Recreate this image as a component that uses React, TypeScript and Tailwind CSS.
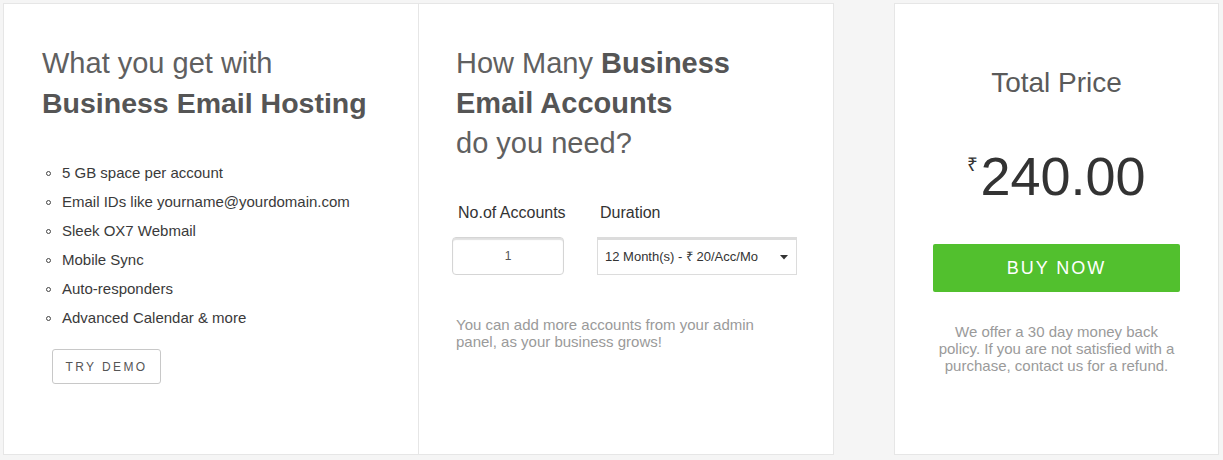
import React from "react";

const features = [
  "5 GB space per account",
  "Email IDs like yourname@yourdomain.com",
  "Sleek OX7 Webmail",
  "Mobile Sync",
  "Auto-responders",
  "Advanced Calendar & more",
];

export default function App() {
  return (
    <div
      className="h-[460px] w-[1223px] bg-[#f5f5f5] pt-[3px] pl-[3px] flex gap-[60px]"
      style={{ fontFamily: '"Liberation Sans", Arial, sans-serif' }}
    >
      {/* Left card */}
      <div className="w-[831px] h-[452px] bg-white border border-[#e6e6e6] flex">
        <div className="w-[415px] border-r border-[#e6e6e6] pl-[38px] pt-[39px]">
          <h2 className="text-[29px] leading-[40px] text-[#606060] font-light">
            What you get with
            <br />
            <span className="font-bold text-[28.5px] text-[#555]">Business Email Hosting</span>
          </h2>
          <ul className="mt-[36px] pl-[4px]">
            {features.map((f) => (
              <li key={f} className="flex items-center h-[29px] text-[15px] text-[#3a3a3a]">
                <span className="w-[5px] h-[5px] rounded-full border border-[#444] mr-[11px] shrink-0" />
                {f}
              </li>
            ))}
          </ul>
          <button className="mt-[16px] ml-[10px] w-[109px] h-[35px] border border-[#c8c8c8] rounded-[3px] text-[12px] tracking-[2.4px] text-[#555] bg-white">
            TRY DEMO
          </button>
        </div>
        <div className="flex-1 pl-[37px] pt-[39px]">
          <h2 className="text-[29px] leading-[40px] text-[#606060] font-light">
            How Many <span className="font-bold text-[#555]">Business</span>
            <br />
            <span className="font-bold text-[#555]">Email Accounts</span>
            <br />
            do you need?
          </h2>
          <div className="flex gap-[33px] mt-[39px] ml-[-4px]">
            <div className="w-[112px]">
              <div className="text-[16px] leading-[22px] text-[#333] pl-[6px] whitespace-nowrap">No.of Accounts</div>
              <div className="mt-[13px] h-[38px] border border-[#d5d5d5] rounded-[4px] shadow-[inset_0_2px_1px_rgba(0,0,0,0.12)] flex items-center justify-center text-[12px] text-[#555]">
                1
              </div>
            </div>
            <div className="w-[200px]">
              <div className="text-[16px] leading-[22px] text-[#333] pl-[3px]">Duration</div>
              <div className="mt-[13px] h-[38px] border border-[#dcdcdc] border-t-[3px] flex items-center justify-between pl-[7px] pr-[8px] text-[13px] text-[#333]">
                <span>12 Month(s) - ₹ 20/Acc/Mo</span>
                <svg width="8" height="5" viewBox="0 0 8 5">
                  <path d="M0 0 L8 0 L4 4.5 Z" fill="#333" />
                </svg>
              </div>
            </div>
          </div>
          <p className="mt-[41px] w-[320px] text-[15px] leading-[17px] text-[#9a9a9a]">
            You can add more accounts from your admin panel, as your business grows!
          </p>
        </div>
      </div>

      {/* Right card */}
      <div className="w-[325px] h-[452px] bg-white border border-[#e6e6e6] flex flex-col items-center pt-[59px] px-[38px]">
        <div className="text-[28px] leading-[40px] text-[#5a5a5a]">Total Price</div>
        <div className="mt-[48px] flex items-start text-[#333]">
          <span className="text-[19px] leading-[19px] mt-[4px] mr-[2px]">₹</span>
          <span className="text-[54px] leading-[50px]">240.00</span>
        </div>
        <button className="mt-[43px] w-[247px] h-[48px] bg-[#52c02e] rounded-[2px] text-white text-[18px] tracking-[2px]">
          BUY NOW
        </button>
        <p className="mt-[31px] w-[247px] text-center text-[15px] leading-[17px] text-[#9a9a9a]">
          We offer a 30 day money back policy. If you are not satisfied with a purchase, contact us for a refund.
        </p>
      </div>
    </div>
  );
}
